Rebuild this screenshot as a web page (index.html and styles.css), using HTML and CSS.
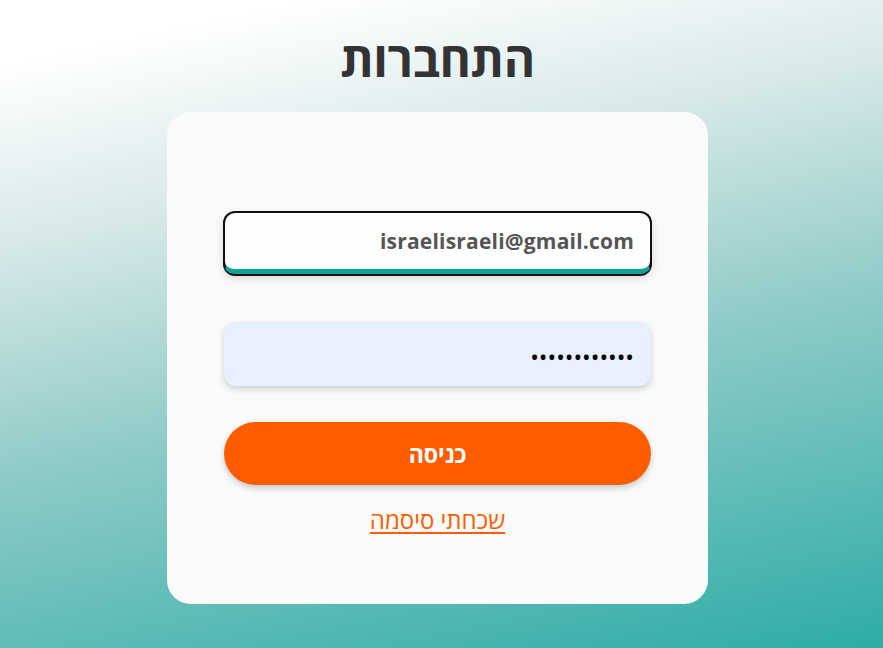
FILE: index.html
```html
<!DOCTYPE html>
<html lang="he" dir="rtl">
<head>
<meta charset="utf-8">
<title>התחברות</title>
<link rel="stylesheet" href="styles.css">
</head>
<body>
<main class="page">
  <h1 class="title">התחברות</h1>
  <form class="card">
    <input class="field field-email" type="email" value="israelisraeli@gmail.com" dir="ltr">
    <input class="field field-pass" type="password" value="123456789012" dir="ltr">
    <button class="btn" type="button">כניסה</button>
    <a class="forgot" href="#">שכחתי סיסמה</a>
  </form>
</main>
</body>
</html>
```

FILE: styles.css
```css
html, body {
  margin: 0;
  padding: 0;
  height: 100%;
}
body {
  font-family: "Open Sans", "DejaVu Sans", sans-serif;
  background: linear-gradient(168deg, #ffffff 8%, #d6e8e8 30%, #8fcbc7 57%, #2eaca6 100%);
  min-height: 648px;
  overflow: hidden;
}
.page {
  display: flex;
  flex-direction: column;
  align-items: center;
  padding-top: 27px;
  padding-right: 8px;
}
.title {
  margin: 0;
  font-size: 48px;
  font-weight: 700;
  color: #333333;
  line-height: 64px;
  height: 85px;
  letter-spacing: -0.5px;
}
.card {
  box-sizing: border-box;
  width: 541px;
  height: 492px;
  background: #f9fbfa;
  border-radius: 24px;
  padding: 99px 56px 0;
  display: flex;
  flex-direction: column;
  align-items: center;
}
.field {
  box-sizing: border-box;
  width: 429px;
  height: 63px;
  border-radius: 12px;
  font-family: inherit;
  text-align: right;
  outline: none;
}
.field-email {
  border: 2px solid #111;
  border-bottom: 5px solid #13a196;
  background: #fdfefe;
  color: #555555;
  font-size: 21px;
  font-weight: 700;
  padding: 0 16px 0 16px;
  letter-spacing: 0.2px;
  box-shadow: 0 2px 0 #111, 0 4px 8px rgba(0,0,0,0.15);
}
.field-pass {
  margin-top: 48px;
  width: 427px;
  height: 64px;
  border: none;
  background: #e8f0fe;
  color: #000;
  font-size: 23px;
  padding: 6px 17px 0;
  box-shadow: 0 3px 6px rgba(0,0,0,0.18);
  letter-spacing: 0;
}
.btn {
  margin-top: 36px;
  width: 427px;
  height: 63px;
  border: none;
  border-radius: 32px;
  background: #ff5c00;
  color: #ffffff;
  font-family: inherit;
  font-size: 23px;
  font-weight: 700;
  box-shadow: 0 3px 6px rgba(0,0,0,0.2);
  cursor: pointer;
}
.forgot {
  margin-top: 20px;
  color: #ff5c00;
  font-size: 24px;
  line-height: 30px;
  text-decoration: underline;
  text-decoration-thickness: 2px;
  text-underline-offset: 3px;
}
```
